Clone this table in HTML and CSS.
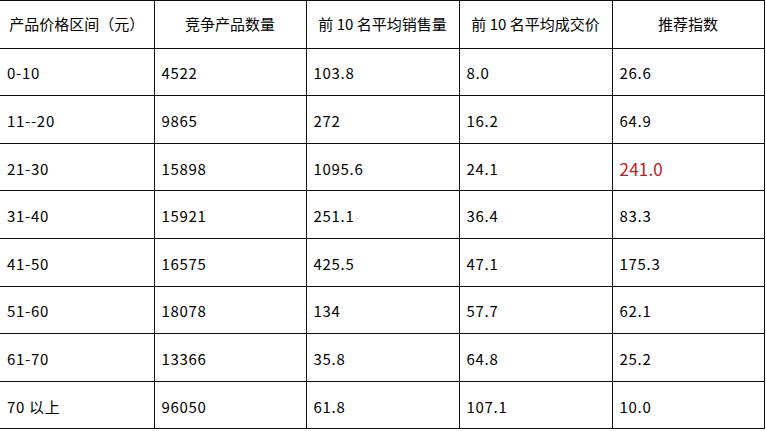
FILE: index.html
```html
<!DOCTYPE html>
<html lang="zh">
<head>
<meta charset="utf-8">
<link rel="stylesheet" href="styles.css">
</head>
<body>
<table class="price-table">
  <colgroup>
    <col class="c1"><col class="c2"><col class="c3"><col class="c4"><col class="c5">
  </colgroup>
  <thead>
    <tr><th>产品价格区间（元）</th><th>竞争产品数量</th><th>前 10 名平均销售量</th><th>前 10 名平均成交价</th><th>推荐指数</th></tr>
  </thead>
  <tbody>
    <tr><td>0-10</td><td>4522</td><td>103.8</td><td>8.0</td><td>26.6</td></tr>
    <tr><td>11--20</td><td>9865</td><td>272</td><td>16.2</td><td>64.9</td></tr>
    <tr><td>21-30</td><td>15898</td><td>1095.6</td><td>24.1</td><td class="hot">241.0</td></tr>
    <tr><td>31-40</td><td>15921</td><td>251.1</td><td>36.4</td><td>83.3</td></tr>
    <tr><td>41-50</td><td>16575</td><td>425.5</td><td>47.1</td><td>175.3</td></tr>
    <tr><td>51-60</td><td>18078</td><td>134</td><td>57.7</td><td>62.1</td></tr>
    <tr><td>61-70</td><td>13366</td><td>35.8</td><td>64.8</td><td>25.2</td></tr>
    <tr><td>70 以上</td><td>96050</td><td>61.8</td><td>107.1</td><td>10.0</td></tr>
  </tbody>
</table>
</body>
</html>
```
FILE: styles.css
```css
html, body {
  margin: 0;
  padding: 0;
  background: #fff;
}
.price-table {
  border-collapse: collapse;
  table-layout: fixed;
  width: 764px;
  font-family: "Noto Sans CJK SC", "Noto Sans", sans-serif;
  font-size: 15px;
  color: #000;
}
.c1 { width: 154px; }
.c2 { width: 152px; }
.c3 { width: 153px; }
.c4 { width: 153px; }
.c5 { width: 152px; }
.price-table tr { height: 47.6px; }
.price-table th, .price-table td {
  border: 1px solid #111;
  padding: 0 0 0 7px;
  vertical-align: middle;
  white-space: nowrap;
}
.price-table th {
  font-weight: normal;
  text-align: center;
  padding: 0 0 1px 0;
}
.price-table td {
  text-align: left;
  letter-spacing: 0.7px;
  padding-top: 2px;
}
.price-table th:first-child, .price-table td:first-child { border-left: none; }
.price-table td.hot {
  color: #c8161d;
  font-size: 17px;
  letter-spacing: 0.2px;
}
```
